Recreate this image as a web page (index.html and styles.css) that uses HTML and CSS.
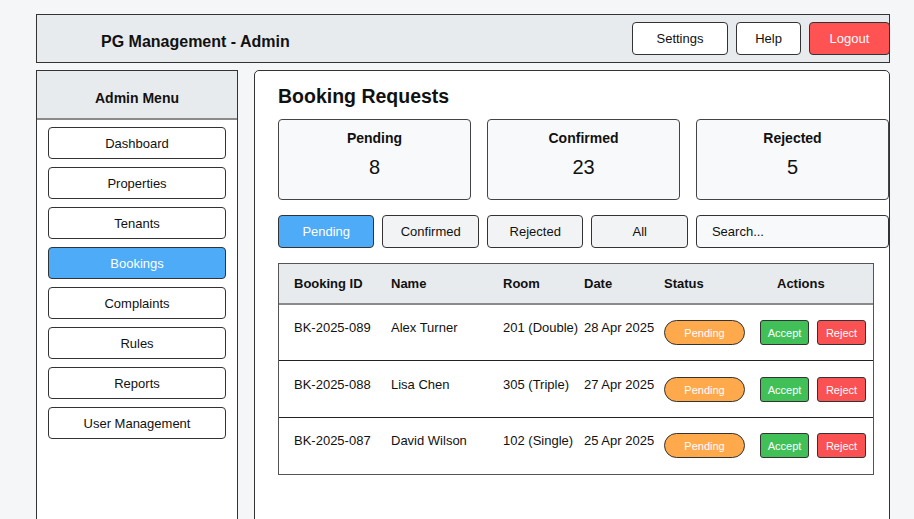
FILE: index.html
```html
<!DOCTYPE html>
<html>
<head>
<meta charset="utf-8">
<link rel="stylesheet" href="styles.css">
</head>
<body>
<header class="topbar">
  <div class="brand">PG Management - Admin</div>
  <div class="top-actions">
    <button class="top-btn settings">Settings</button>
    <button class="top-btn help">Help</button>
    <button class="top-btn logout">Logout</button>
  </div>
</header>
<div class="layout">
  <aside class="sidebar">
    <div class="side-head">Admin Menu</div>
    <nav class="menu">
      <div class="menu-item">Dashboard</div>
      <div class="menu-item">Properties</div>
      <div class="menu-item">Tenants</div>
      <div class="menu-item active">Bookings</div>
      <div class="menu-item">Complaints</div>
      <div class="menu-item">Rules</div>
      <div class="menu-item">Reports</div>
      <div class="menu-item">User Management</div>
    </nav>
  </aside>
  <main class="panel">
    <h1 class="title">Booking Requests</h1>
    <div class="stats">
      <div class="stat"><div class="stat-label">Pending</div><div class="stat-value">8</div></div>
      <div class="stat"><div class="stat-label">Confirmed</div><div class="stat-value">23</div></div>
      <div class="stat"><div class="stat-label">Rejected</div><div class="stat-value">5</div></div>
    </div>
    <div class="filters">
      <div class="filter active">Pending</div>
      <div class="filter">Confirmed</div>
      <div class="filter">Rejected</div>
      <div class="filter">All</div>
      <div class="search">Search...</div>
    </div>
    <div class="table">
      <div class="row head">
        <div class="c-id">Booking ID</div>
        <div class="c-name">Name</div>
        <div class="c-room">Room</div>
        <div class="c-date">Date</div>
        <div class="c-status">Status</div>
        <div class="c-actions">Actions</div>
      </div>
      <div class="row">
        <div class="c-id">BK-2025-089</div>
        <div class="c-name">Alex Turner</div>
        <div class="c-room">201 (Double)</div>
        <div class="c-date">28 Apr 2025</div>
        <div class="c-status"><span class="pill">Pending</span></div>
        <div class="c-actions"><span class="act accept">Accept</span><span class="act reject">Reject</span></div>
      </div>
      <div class="row mid">
        <div class="c-id">BK-2025-088</div>
        <div class="c-name">Lisa Chen</div>
        <div class="c-room">305 (Triple)</div>
        <div class="c-date">27 Apr 2025</div>
        <div class="c-status"><span class="pill">Pending</span></div>
        <div class="c-actions"><span class="act accept">Accept</span><span class="act reject">Reject</span></div>
      </div>
      <div class="row last">
        <div class="c-id">BK-2025-087</div>
        <div class="c-name">David Wilson</div>
        <div class="c-room">102 (Single)</div>
        <div class="c-date">25 Apr 2025</div>
        <div class="c-status"><span class="pill">Pending</span></div>
        <div class="c-actions"><span class="act accept">Accept</span><span class="act reject">Reject</span></div>
      </div>
    </div>
  </main>
</div>
</body>
</html>
```

FILE: styles.css
```css
* { box-sizing: border-box; }
html, body { height: 100%; }
body {
  margin: 0;
  padding: 14px 24px 0 36px;
  background: #f5f6f8;
  font-family: "Liberation Sans", Arial, sans-serif;
  color: #111;
  font-size: 13px;
  overflow: hidden;
}
.topbar {
  width: 854px;
  height: 49px;
  background: #e8ebee;
  border: 1px solid #333;
  display: flex;
  align-items: center;
  justify-content: space-between;
  padding-left: 64px;
}
.brand { font-size: 16px; font-weight: bold; margin-top: 7px; }
.top-actions { display: flex; gap: 8px; align-items: center; }
.top-btn {
  font-family: inherit;
  font-size: 13px;
  height: 33px;
  border: 1px solid #333;
  border-radius: 4px;
  background: #fff;
  color: #111;
  padding: 0;
}
.settings { width: 96px; }
.help { width: 65px; }
.logout { width: 81px; background: #ff5252; color: #fff; margin-right: -1px; }

.layout { display: flex; gap: 16px; margin-top: 7px; }
.sidebar {
  width: 202px;
  height: 460px;
  background: #fff;
  border: 1px solid #333;
  display: flex;
  flex-direction: column;
}
.side-head {
  height: 49px;
  flex-shrink: 0;
  background: #e8ebee;
  border-bottom: 2px solid #8a8a8a;
  display: flex;
  align-items: center;
  justify-content: center;
  font-weight: bold;
  font-size: 14px;
  padding-top: 6px;
}
.menu { display: flex; flex-direction: column; gap: 8px; padding: 7px 11px 0 11px; }
.menu-item {
  height: 32px;
  border: 1px solid #333;
  border-radius: 4px;
  background: #fff;
  display: flex;
  align-items: center;
  justify-content: center;
}
.menu-item.active { background: #4dabf7; color: #fff; }

.panel {
  width: 636px;
  height: 460px;
  background: #fff;
  border: 1px solid #333;
  border-radius: 5px;
  padding: 0 0 0 23px;
}
.title { font-size: 19.5px; font-weight: bold; margin: 13px 0 0 0; line-height: 24px; }
.stats { display: flex; gap: 16px; margin-top: 11px; }
.stat {
  width: 194px;
  height: 81px;
  background: #f8f9fa;
  border: 1px solid #444;
  border-radius: 4px;
  display: flex;
  flex-direction: column;
  align-items: center;
  padding-top: 9px;
}
.stat-label { font-weight: bold; font-size: 14px; line-height: 18px; }
.stat-value { font-size: 20px; margin-top: 8px; line-height: 24px; }

.filters { display: flex; gap: 8px; margin-top: 15px; }
.filter {
  width: 97px;
  height: 33px;
  border: 1px solid #333;
  border-radius: 4px;
  background: #f1f3f5;
  display: flex;
  align-items: center;
  justify-content: center;
}
.filter.active { background: #4dabf7; color: #fff; }
.search {
  width: 194px;
  height: 33px;
  border: 1px solid #333;
  border-radius: 4px;
  background: #f8f9fa;
  display: flex;
  align-items: center;
  padding-left: 15px;
}

.table {
  width: 596px;
  margin-top: 15px;
  border: 1px solid #555;
}
.row {
  display: grid;
  grid-template-columns: 97px 112px 81px 80px 96px 1fr;
  padding-left: 15px;
  height: 56px;
  border-bottom: 1px solid #222;
  align-items: start;
}
.row.mid { height: 57px; }
.row.last { border-bottom: none; height: 56px; }
.row > div { padding-top: 15px; white-space: nowrap; }
.row.mid > div { padding-top: 16px; }
.row.last > div { padding-top: 15px; }
.row.head {
  height: 41px;
  background: #e8ebee;
  border-bottom: 2px solid #8a8a8a;
  font-weight: bold;
  align-items: center;
}
.row.head > div { padding-top: 0; }
.row.head .c-actions { display: block; padding-left: 17px; }
.pill {
  display: inline-flex;
  align-items: center;
  justify-content: center;
  width: 81px;
  height: 25px;
  border: 1px solid #333;
  border-radius: 13px;
  background: #ffa94d;
  color: #fff;
  font-size: 11px;
}
.c-actions { display: flex; gap: 8px; }
.act {
  display: inline-flex;
  align-items: center;
  justify-content: center;
  width: 49px;
  height: 25px;
  border: 1px solid #333;
  border-radius: 3px;
  color: #fff;
  font-size: 11px;
}
.accept { background: #40c057; }
.reject { background: #fa5252; }
```
